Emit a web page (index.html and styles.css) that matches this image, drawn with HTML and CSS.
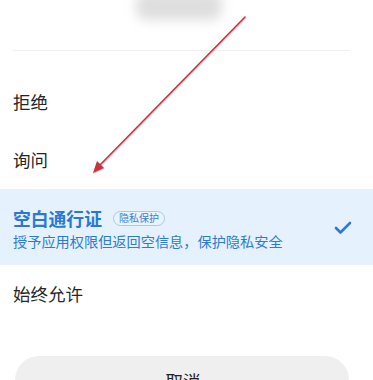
FILE: index.html
```html
<!DOCTYPE html>
<html lang="zh">
<head>
<meta charset="utf-8">
<link rel="stylesheet" href="styles.css">
</head>
<body>
<div class="sheet">
  <div class="header"><div class="blob"></div></div>
  <div class="divider"></div>
  <div class="options">
    <div class="row"><span class="label">拒绝</span></div>
    <div class="row"><span class="label">询问</span></div>
    <div class="row selected">
      <div class="text">
        <div class="title-line"><span class="title">空白通行证</span><span class="badge">隐私保护</span></div>
        <div class="sub">授予应用权限但返回空信息，保护隐私安全</div>
      </div>
      <svg class="check" width="18" height="14" viewBox="0 0 18 14"><polyline points="2,7 6.5,11.5 16,2" fill="none" stroke="#2b7ad6" stroke-width="2.6" stroke-linecap="round" stroke-linejoin="round"/></svg>
    </div>
    <div class="row"><span class="label">始终允许</span></div>
  </div>
  <div class="btn-wrap"><div class="cancel">取消</div></div>
  <svg class="arrow" width="373" height="380" viewBox="0 0 373 380">
    <defs><filter id="sh" x="-10%" y="-10%" width="120%" height="120%"><feDropShadow dx="0.6" dy="0.8" stdDeviation="0.6" flood-color="#000" flood-opacity="0.25"/></filter></defs>
    <g filter="url(#sh)">
      <line x1="245" y1="17" x2="99" y2="166" stroke="#c6323e" stroke-width="1.5" stroke-linecap="round"/>
      <polygon points="93,173 97,161 104,168" fill="#c6323e"/>
    </g>
  </svg>
</div>
</body>
</html>
```
FILE: styles.css
```css
* { box-sizing: border-box; }
html, body { margin: 0; padding: 0; background: #fff; }
body {
  font-family: "Noto Sans CJK SC", "Noto Sans", sans-serif;
  color: #1f1f1f;
  width: 373px;
  height: 380px;
  overflow: hidden;
}
.sheet { position: relative; width: 373px; height: 380px; }
.header { height: 50px; position: relative; overflow: hidden; }
.blob {
  position: absolute;
  left: 136px;
  top: -8px;
  width: 86px;
  height: 28px;
  background: #dedede;
  border-radius: 10px;
  filter: blur(6px);
}
.divider { height: 1px; background: #f1f1f1; margin: 0 23px 0 13px; }
.options { margin-top: 22px; display: flex; flex-direction: column; }
.row {
  height: 58px;
  display: flex;
  align-items: center;
  padding: 0 21px 0 13px;
}
.label { font-size: 17.5px; line-height: 24px; color: #262626; }
.selected {
  height: 76px;
  background: #e5f1fd;
  justify-content: space-between;
}
.text { display: flex; flex-direction: column; gap: 1px; margin-top: 3px; }
.title-line { display: flex; align-items: center; gap: 11px; }
.title { font-size: 17.8px; font-weight: 700; color: #2a78d4; line-height: 24px; }
.badge {
  font-size: 10px;
  line-height: 12px;
  color: #3c7fcf;
  border: 1px solid #a9c9ec;
  border-radius: 8px;
  padding: 0 5px;
  height: 15px;
  display: flex;
  align-items: center;
  background: #e9f3fd;
}
.sub { font-size: 14.2px; line-height: 20px; color: #2e7bd6; letter-spacing: 0; }
.check { margin-right: 0; margin-top: 1px; }
.btn-wrap { margin-top: 33px; padding: 0 24px 0 15px; }
.cancel {
  height: 48px;
  border-radius: 24px;
  background: #efefef;
  display: flex;
  justify-content: center;
  align-items: center;
  font-size: 17.5px;
  color: #222;
  padding-left: 2px;
}
.arrow { position: absolute; left: 0; top: 0; pointer-events: none; }
```
